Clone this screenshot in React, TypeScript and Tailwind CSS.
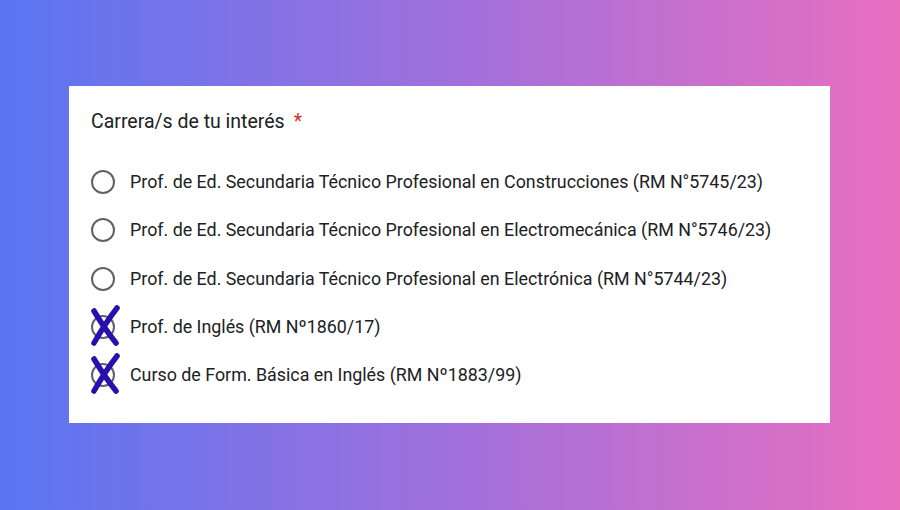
import React from "react";

const options = [
  { label: "Prof. de Ed. Secundaria Técnico Profesional en Construcciones (RM N°5745/23)", crossed: false },
  { label: "Prof. de Ed. Secundaria Técnico Profesional en Electromecánica (RM N°5746/23)", crossed: false },
  { label: "Prof. de Ed. Secundaria Técnico Profesional en Electrónica (RM N°5744/23)", crossed: false },
  { label: "Prof. de Inglés (RM Nº1860/17)", crossed: true },
  { label: "Curso de Form. Básica en Inglés (RM Nº1883/99)", crossed: true },
];

function Cross() {
  return (
    <svg className="absolute -left-[1px] -top-[10px]" width="32" height="42" viewBox="0 0 32 42">
      <path d="M4 6 C10 16 18 28 26 38" stroke="#2710ad" strokeWidth="5.5" fill="none" strokeLinecap="round" />
      <path d="M27 3 C20 12 12 24 4 38" stroke="#2710ad" strokeWidth="5.5" fill="none" strokeLinecap="round" />
    </svg>
  );
}

export default function App() {
  return (
    <div
      className="w-[900px] h-[510px] flex items-start pt-[86px] pl-[69px]"
      style={{ background: "linear-gradient(90deg, #5a75f2 0%, #a070dc 50%, #e86fc0 100%)" }}
    >
      <div className="w-[761px] h-[337px] bg-white pl-[22px] pt-[24px] font-['Roboto',sans-serif] text-[#202124]">
        <div className="text-[19.5px] leading-[24px] h-[24px] flex">
          <span>Carrera/s de tu interés</span>
          <span className="text-[#d93025] ml-[9px]">*</span>
        </div>
        <div className="mt-[24px] flex flex-col">
          {options.map((o, i) => (
            <div key={i} className="h-[48.25px] flex items-center">
              <div className="relative w-[24px] h-[24px]">
                <div className="w-[24px] h-[24px] rounded-full border-[2px] border-[#5f6368]" />
                {o.crossed && <Cross />}
              </div>
              <span className="ml-[15px] text-[17.85px] leading-[24px] text-[#202124]">{o.label}</span>
            </div>
          ))}
        </div>
      </div>
    </div>
  );
}
